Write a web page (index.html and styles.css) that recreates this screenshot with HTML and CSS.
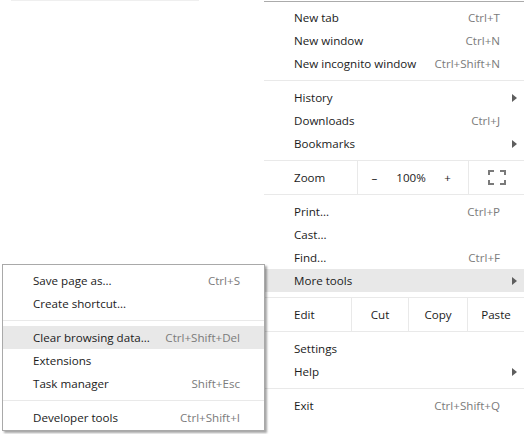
FILE: index.html
```html
<!DOCTYPE html>
<html>
<head>
<meta charset="utf-8">
<link rel="stylesheet" href="styles.css">
</head>
<body>
<div class="page">
  <div class="backdrop"><div class="ghost-line"></div></div>
  <div class="menu main-menu">
    <div class="item"><span class="label">New tab</span><span class="accel">Ctrl+T</span></div>
    <div class="item"><span class="label">New window</span><span class="accel">Ctrl+N</span></div>
    <div class="item"><span class="label">New incognito window</span><span class="accel">Ctrl+Shift+N</span></div>
    <div class="sep"></div>
    <div class="item"><span class="label">History</span><span class="arrow"></span></div>
    <div class="item"><span class="label">Downloads</span><span class="accel">Ctrl+J</span></div>
    <div class="item"><span class="label">Bookmarks</span><span class="arrow"></span></div>
    <div class="zoom-row">
      <div class="cell first">Zoom</div>
      <div class="cell zoom-ctrl"><span class="zbtn">–</span><span class="zval">100%</span><span class="zbtn">+</span></div>
      <div class="cell fs">
        <svg width="18" height="15" viewBox="0 0 18 15"><path d="M1 5V1H6M12 1H17V5M17 10V14H12M6 14H1V10" fill="none" stroke="#7a7a7a" stroke-width="2"/></svg>
      </div>
    </div>
    <div class="item"><span class="label">Print...</span><span class="accel">Ctrl+P</span></div>
    <div class="item"><span class="label">Cast...</span></div>
    <div class="item"><span class="label">Find...</span><span class="accel">Ctrl+F</span></div>
    <div class="item active"><span class="label">More tools</span><span class="arrow"></span></div>
    <div class="edit-row">
      <div class="cell first">Edit</div>
      <div class="cell">Cut</div>
      <div class="cell">Copy</div>
      <div class="cell">Paste</div>
    </div>
    <div class="item"><span class="label">Settings</span></div>
    <div class="item"><span class="label">Help</span><span class="arrow"></span></div>
    <div class="sep"></div>
    <div class="item"><span class="label">Exit</span><span class="accel">Ctrl+Shift+Q</span></div>
  </div>
  <div class="menu sub-menu">
    <div class="item"><span class="label">Save page as...</span><span class="accel">Ctrl+S</span></div>
    <div class="item"><span class="label">Create shortcut...</span></div>
    <div class="sep"></div>
    <div class="item active"><span class="label">Clear browsing data...</span><span class="accel">Ctrl+Shift+Del</span></div>
    <div class="item"><span class="label">Extensions</span></div>
    <div class="item"><span class="label">Task manager</span><span class="accel">Shift+Esc</span></div>
    <div class="sep"></div>
    <div class="item"><span class="label">Developer tools</span><span class="accel">Ctrl+Shift+I</span></div>
  </div>
</div>
</body>
</html>
```

FILE: styles.css
```css
html, body {
  margin: 0;
  padding: 0;
  background: #ffffff;
  overflow: hidden;
}

body {
  font-family: "Open Sans", "Noto Sans", "Liberation Sans", sans-serif;
  font-size: 11.6px;
  color: #1b1b1b;
}

.page {
  position: relative;
  display: flex;
  width: 524px;
  height: 434px;
}

.backdrop {
  width: 264px;
  flex: none;
}

.ghost-line {
  margin-left: 11px;
  width: 188px;
  height: 1px;
  background: #efefef;
}

.menu {
  background: #ffffff;
}

.main-menu {
  flex: 1;
  margin-top: 1px;
  border-top: 1px solid #ababab;
  padding-top: 4px;
  align-self: flex-start;
}

.item {
  display: flex;
  align-items: center;
  height: 23px;
  padding: 0 7px 0 30px;
  white-space: nowrap;
}

.item.active {
  background: #e8e8e8;
}

.accel {
  margin-left: auto;
  margin-right: 17px;
  color: #7b7b7b;
}

.arrow {
  margin-left: auto;
  width: 0;
  height: 0;
  border-left: 5px solid #5e5e5e;
  border-top: 4px solid transparent;
  border-bottom: 4px solid transparent;
  margin-right: 0;
}

.sep {
  height: 1px;
  background: #e9e9e9;
  margin: 5px 0;
}

.zoom-row,
.edit-row {
  display: grid;
  height: 33px;
  border-top: 1px solid #e9e9e9;
  border-bottom: 1px solid #e9e9e9;
  margin: 5px 0;
}

.zoom-row {
  grid-template-columns: 93px 111px 1fr;
}

.edit-row {
  grid-template-columns: 87px 57px 59px 1fr;
}

.cell {
  display: flex;
  align-items: center;
  justify-content: center;
  border-left: 1px solid #e9e9e9;
}

.cell.first {
  justify-content: flex-start;
  padding-left: 30px;
  border-left: none;
}

.zoom-ctrl {
  display: grid;
  grid-template-columns: 33px 40px 33px;
  justify-content: start;
  align-items: center;
}

.zbtn,
.zval {
  text-align: center;
}

.fs svg {
  display: block;
}

.sub-menu {
  position: absolute;
  left: 2px;
  top: 264px;
  width: 261px;
  border: 1px solid #a9a9a9;
  padding: 4px 0 1px;
  box-shadow: 2px 2px 2px rgba(0, 0, 0, 0.35);
}

.sub-menu .item {
  padding-right: 7px;
}
```
